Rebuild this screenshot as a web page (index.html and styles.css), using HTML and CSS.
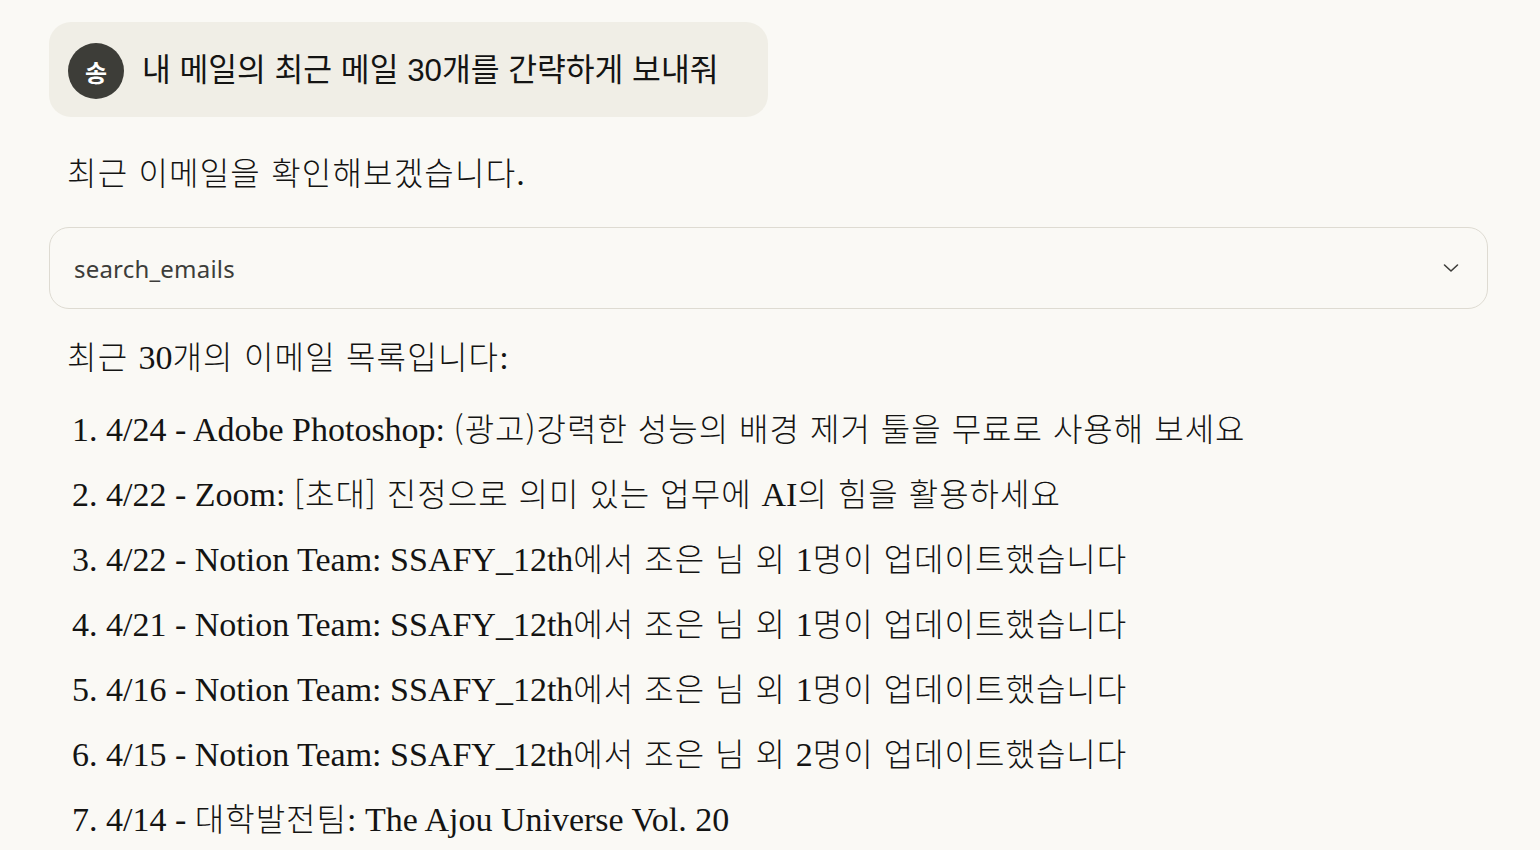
FILE: index.html
```html
<!DOCTYPE html>
<html lang="ko">
<head>
<meta charset="utf-8">
<link rel="stylesheet" href="styles.css">
</head>
<body>
<main class="chat">
  <div class="user-row">
    <div class="user-bubble">
      <div class="avatar">송</div>
      <div class="user-text">내 메일의 최근 메일 30개를 간략하게 보내줘</div>
    </div>
  </div>
  <div class="reply">
    <p class="para first"><span class="ko">최근 이메일을 확인해보겠습니다</span>.</p>
    <div class="tool">
      <span class="tool-name">search_emails</span>
      <svg class="chev" width="20" height="20" viewBox="0 0 20 20" fill="none"><path d="M3.5 7 L10 13 L16.5 7" stroke="#3d3d3a" stroke-width="1.6" stroke-linecap="round" stroke-linejoin="round"/></svg>
    </div>
    <p class="para"><span class="ko">최근 </span>30<span class="ko">개의 이메일 목록입니다</span>:</p>
    <ol class="mails">
      <li>4/24 - Adobe Photoshop: <span class="ko">(광고)강력한 성능의 배경 제거 툴을 무료로 사용해 보세요</span></li>
      <li>4/22 - Zoom: <span class="ko">[초대] 진정으로 의미 있는 업무에 </span>AI<span class="ko">의 힘을 활용하세요</span></li>
      <li>4/22 - Notion Team: SSAFY_12th<span class="ko">에서 조은 님 외 </span>1<span class="ko">명이 업데이트했습니다</span></li>
      <li>4/21 - Notion Team: SSAFY_12th<span class="ko">에서 조은 님 외 </span>1<span class="ko">명이 업데이트했습니다</span></li>
      <li>4/16 - Notion Team: SSAFY_12th<span class="ko">에서 조은 님 외 </span>1<span class="ko">명이 업데이트했습니다</span></li>
      <li>4/15 - Notion Team: SSAFY_12th<span class="ko">에서 조은 님 외 </span>2<span class="ko">명이 업데이트했습니다</span></li>
      <li>4/14 - <span class="ko">대학발전팀</span>: The Ajou Universe Vol. 20</li>
    </ol>
  </div>
</main>
</body>
</html>
```

FILE: styles.css
```css
html, body {
  margin: 0;
  padding: 0;
  background: #faf9f5;
  color: #141413;
  overflow: hidden;
}
.chat {
  padding: 22px 52px 0 49px;
}
.user-row {
  display: flex;
}
.user-bubble {
  display: flex;
  align-items: center;
  gap: 18px;
  background: #f0eee6;
  border-radius: 22px;
  padding: 21px 50px 18px 19px;
}
.avatar {
  width: 56px;
  height: 56px;
  border-radius: 50%;
  background: #3d3d38;
  color: #ffffff;
  display: flex;
  align-items: center;
  justify-content: center;
  font-family: "Noto Sans CJK KR", sans-serif;
  font-weight: 700;
  font-size: 24px;
}
.user-text {
  font-family: "Liberation Sans", "Noto Sans CJK KR", sans-serif;
  font-size: 31.3px;
  line-height: 44px;
  color: #141413;
}
.reply {
  font-family: "Liberation Serif", "Noto Sans CJK KR", serif;
  color: #141413;
}
.ko {
  font-family: "Noto Sans CJK KR", sans-serif;
  font-weight: 300;
  line-height: 1;
}
.para {
  margin: 0;
  padding-left: 18px;
  font-size: 34px;
  line-height: 48px;
}
.para .ko {
  font-size: 32px;
  letter-spacing: 1.2px;
}
.para.first {
  margin-top: 33px;
}
.tool {
  margin-top: 29px;
  margin-bottom: 25px;
  height: 80px;
  border: 1px solid #dedbd2;
  border-radius: 20px;
  display: flex;
  align-items: center;
  justify-content: space-between;
  padding: 0 26px 0 24px;
}
.tool-name {
  font-family: "Noto Sans", "Liberation Sans", sans-serif;
  font-size: 24px;
  color: #3d3d3a;
  letter-spacing: 0.2px;
}
.mails {
  margin: 15px 0 0 0;
  padding-left: 0;
  list-style: none;
  counter-reset: m;
}
.mails li {
  counter-increment: m;
  padding-left: 23px;
  font-size: 34px;
  line-height: 65px;
  white-space: nowrap;
}
.mails li::before {
  content: counter(m) ". ";
}
.mails .ko {
  font-size: 32px;
  letter-spacing: 1px;
}
```
